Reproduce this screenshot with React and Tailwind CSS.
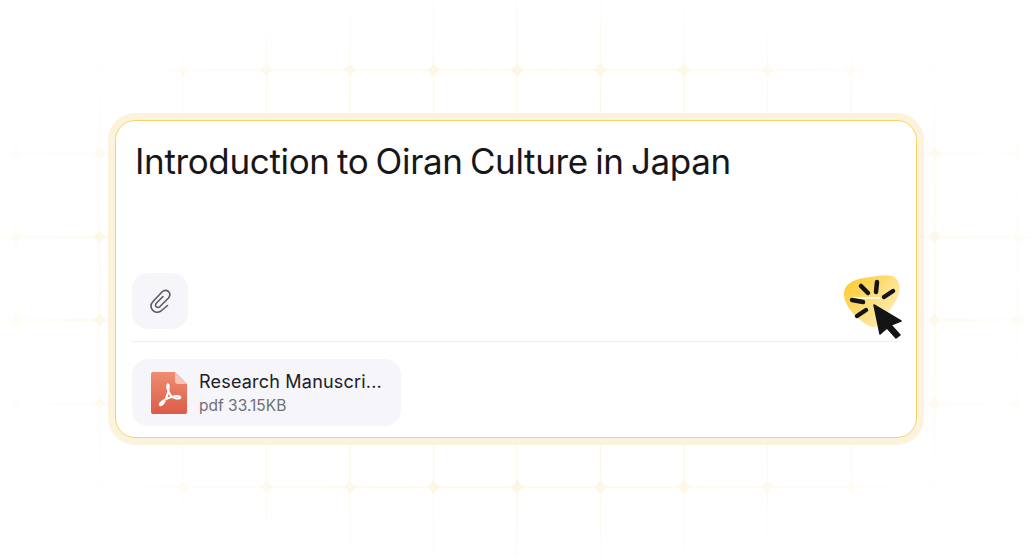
import React from "react";

const xs = [16, 99.5, 183, 266.5, 350, 433.5, 517, 600.5, 684, 767.5, 851, 934.5, 1018];
const ys = [-13, 70, 153.5, 237, 320, 403.5, 487, 570];

// background grid with little diamonds on the crossings
function GridBackdrop() {
  return (
    <svg className="absolute inset-0" width="1032" height="558" viewBox="0 0 1032 558" fill="none">
      <defs>
        <radialGradient id="fade" gradientUnits="userSpaceOnUse" cx="516" cy="279" r="1" gradientTransform="translate(516 279) scale(590 320) translate(-516 -279)">
          <stop offset="0.6" stopColor="#fff" />
          <stop offset="1" stopColor="#000" />
        </radialGradient>
        <mask id="gridMask">
          <rect width="1032" height="558" fill="url(#fade)" />
        </mask>
      </defs>
      <g mask="url(#gridMask)">
        {xs.map(x => <line key={x} x1={x} x2={x} y1="0" y2="558" stroke="#fef7e5" strokeWidth="1.300" />)}
        {ys.map(y => <line key={y} x1="0" x2="1032" y1={y} y2={y} stroke="#fef7e5" strokeWidth="1.300" />)}
        {xs.flatMap(x => ys.map(y => (
          <path key={x + "-" + y} d={`M${x} ${y - 7}Q${x + 2.500} ${y - 2.500} ${x + 7} ${y}Q${x + 2.500} ${y + 2.500} ${x} ${y + 7}Q${x - 2.500} ${y + 2.500} ${x - 7} ${y}Q${x - 2.500} ${y - 2.500} ${x} ${y - 7}Z`} fill="#fdf5df" />
        )))}
      </g>
    </svg>
  );
}

function ClickIcon() {
  return (
    <svg className="-mb-[15px]" width="66" height="74" viewBox="0 0 66 74" fill="none">
      <defs>
        <linearGradient id="blob" x1="6" y1="14" x2="52" y2="52" gradientUnits="userSpaceOnUse">
          <stop offset="0" stopColor="#fbcd35" />
          <stop offset="1" stopColor="#feefbd" />
        </linearGradient>
      </defs>
      <path d="M4 23C5 14 12 10 24 8C36 6 46 4 52 6C58 8 61 15 59 23C57 31 50 40 44 48C40 54 37 58 32 57C24 55 3 38 4 23Z" fill="url(#blob)" />
      <path d="M12 28H40" stroke="#fff" strokeWidth="1.500" />
      <g stroke="#141414" strokeWidth="4.500" strokeLinecap="round">
        <path d="M21 16L28 23" />
        <path d="M37 12L36 22" />
        <path d="M53 21L44 27" />
        <path d="M12 30L23 32" />
        <path d="M17 46L26 40" />
      </g>
      <path d="M34 35L61 51L51 55L60 65L56 68L47 58L40 64Z" fill="#141414" stroke="#141414" strokeWidth="1.500" strokeLinejoin="round" />
    </svg>
  );
}

function PdfIcon() {
  return (
    <svg width="36" height="42" viewBox="0 0 36 42" fill="none">
      <defs>
        <linearGradient id="pdf" x1="18" y1="0" x2="18" y2="42" gradientUnits="userSpaceOnUse">
          <stop offset="0" stopColor="#f08d72" />
          <stop offset="1" stopColor="#dc5b48" />
        </linearGradient>
      </defs>
      <path d="M2 0H24L36 12V40a2 2 0 0 1-2 2H2a2 2 0 0 1-2-2V2a2 2 0 0 1 2-2Z" fill="url(#pdf)" />
      <path d="M24 0L36 12H27a3 3 0 0 1-3-3Z" fill="#f9c6b6" />
      <path d="M16.500 12.500C15.500 15 17.500 20 20 24C22 26.500 27 27 29 26C30 25 28.500 24 26 24C21 24 13 27.500 9.500 31C8 32.500 9 34 10.500 33C13.500 31 17.500 23 17.800 15C17.900 13 17 12 16.500 12.500Z" stroke="#fff" strokeWidth="2" strokeLinejoin="round" />
    </svg>
  );
}

export default function App() {
  return (
    <div className="relative w-[1032px] h-[558px] bg-white overflow-hidden font-['Inter',sans-serif]">
      <GridBackdrop />
      <div className="relative pt-[120px] pl-[115px]">
        <div className="w-[802px] h-[318px] rounded-[20px] bg-white border border-[#f8d563] shadow-[0_0_0_7px_#fbf3dc] flex flex-col">
          <h1 className="pt-[16px] pl-[19px] text-[35px] leading-[48px] font-normal tracking-[-0.35px] [word-spacing:-2.2px] text-[#17171a]">
            Introduction to Oiran Culture in Japan
          </h1>
          <div className="mt-auto flex items-end justify-between pl-4 pr-[10px]">
            <button className="w-14 h-14 rounded-2xl bg-[#f5f5fa] flex items-center justify-center text-[#5a5a5f]">
              <svg width="26" height="26" viewBox="0 0 26 26" fill="none" stroke="currentColor" strokeWidth="1.600" strokeLinecap="round" strokeLinejoin="round">
                <path d="M20.500 17.500L14 23C11 25 7.500 24.500 5.500 22C3.500 19.500 3.800 16 6 13.500L15 4C17 2 19.500 2 21.500 3.500C23.500 5.500 23 8 21.500 10L13 18.500C11.500 20 10 19.500 9 18.500C8 17.500 8.500 16 10 14.500L16 8.500" />
              </svg>
            </button>
            <ClickIcon />
          </div>
          <div className="mt-3 mx-4 border-t border-[#f0f0f2]" />
          <div className="mt-[17px] mb-[11px] ml-4 w-[269px] h-[67px] rounded-2xl bg-[#f5f5fa] flex items-center pl-[19px]">
            <PdfIcon />
            <div className="ml-[12px] min-w-0">
              <div className="whitespace-nowrap text-[18px] leading-[24px] tracking-[0.2px] text-[#202024]">Research Manuscri...</div>
              <div className="mt-[2px] text-[15.500px] leading-[20px] text-[#6f6f76]">pdf 33.15KB</div>
            </div>
          </div>
        </div>
      </div>
    </div>
  );
}
